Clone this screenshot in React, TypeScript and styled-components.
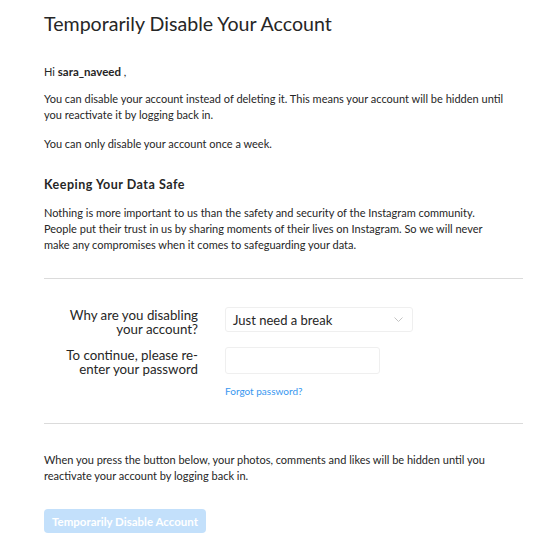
import styled, { createGlobalStyle } from 'styled-components';

const GlobalStyle = createGlobalStyle`
  body {
    margin: 0;
    background: #fff;
    font-family: Lato, 'Open Sans', sans-serif;
    color: #262626;
  }
`;

const Page = styled.div`
  width: 540px;
  padding: 12px 17px 0 44px;
  box-sizing: border-box;
`;

const Title = styled.h1`
  margin: 0 0 28px;
  font-size: 19.6px;
  line-height: 24px;
  font-weight: 400;
  color: #262626;
`;

const Text = styled.p<{ gap?: number }>`
  margin: 0 0 ${(p) => p.gap ?? 12}px;
  max-width: 462px;
  font-size: 11px;
  line-height: 16px;
`;

const Name = styled.b`
  font-size: 11.5px;
`;

const Heading = styled.h2`
  margin: 0 0 12px;
  font-size: 12.5px;
  letter-spacing: 0.5px;
  line-height: 16px;
  font-weight: 700;
`;

const Divider = styled.hr<{ top: number }>`
  margin: ${(p) => p.top}px 0 0;
  border: 0;
  border-top: 1px solid #dbdbdb;
  width: 479px;
`;

const Form = styled.div`
  display: grid;
  grid-template-columns: 154px 1fr;
  column-gap: 27px;
  row-gap: 11px;
  margin-top: 28px;
`;

const Label = styled.label`
  text-align: right;
  font-size: 13.3px;
  line-height: 14px;
  font-weight: 400;
  color: #262626;
  padding-top: 1px;
`;

const SelectBox = styled.div`
  width: 188px;
  height: 25px;
  box-sizing: border-box;
  border: 1px solid #efefef;
  border-radius: 3px;
  display: flex;
  align-items: center;
  justify-content: space-between;
  padding: 0 9px 0 7px;
  font-size: 13px;
  color: #262626;
`;

const Field = styled.div`
  display: flex;
  flex-direction: column;
`;

const Input = styled.div`
  width: 155px;
  height: 27px;
  box-sizing: border-box;
  border: 1px solid #efefef;
  border-radius: 3px;
`;

const Link = styled.a`
  margin-top: 11px;
  font-size: 10px;
  line-height: 12px;
  color: #3897f0;
  text-decoration: none;
`;

const Button = styled.button`
  margin-top: 25px;
  width: 162px;
  height: 24px;
  border: 0;
  border-radius: 4px;
  background: #c3e0fb;
  color: #fff;
  font-family: inherit;
  font-weight: 700;
  font-size: 11.5px;
  white-space: nowrap;
  padding: 0;
`;

const Chevron = () => (
  <svg width="9" height="5" viewBox="0 0 9 5">
    <path d="M0.5 0.5l4 4 4-4" fill="none" stroke="#c4c4c4" strokeWidth="1" />
  </svg>
);

export default function App() {
  return (
    <Page>
      <GlobalStyle />
      <Title>Temporarily Disable Your Account</Title>
      <Text gap={11}>
        Hi <Name>sara_naveed</Name> ,
      </Text>
      <Text gap={13}>
        You can disable your account instead of deleting it. This means your account will be hidden until
        you reactivate it by logging back in.
      </Text>
      <Text gap={25}>You can only disable your account once a week.</Text>
      <Heading>Keeping Your Data Safe</Heading>
      <Text gap={0}>
        Nothing is more important to us than the safety and security of the Instagram community.
        People put their trust in us by sharing moments of their lives on Instagram. So we will never
        make any compromises when it comes to safeguarding your data.
      </Text>
      <Divider top={25} />
      <Form>
        <Label>Why are you disabling your account?</Label>
        <SelectBox>
          <span>Just need a break</span>
          <Chevron />
        </SelectBox>
        <Label>To continue, please re-enter your password</Label>
        <Field>
          <Input />
          <Link href="#">Forgot password?</Link>
        </Field>
      </Form>
      <Divider top={26} />
      <Text gap={0} style={{ marginTop: 28 }}>
        When you press the button below, your photos, comments and likes will be hidden until you
        reactivate your account by logging back in.
      </Text>
      <Button disabled>Temporarily Disable Account</Button>
    </Page>
  );
}
